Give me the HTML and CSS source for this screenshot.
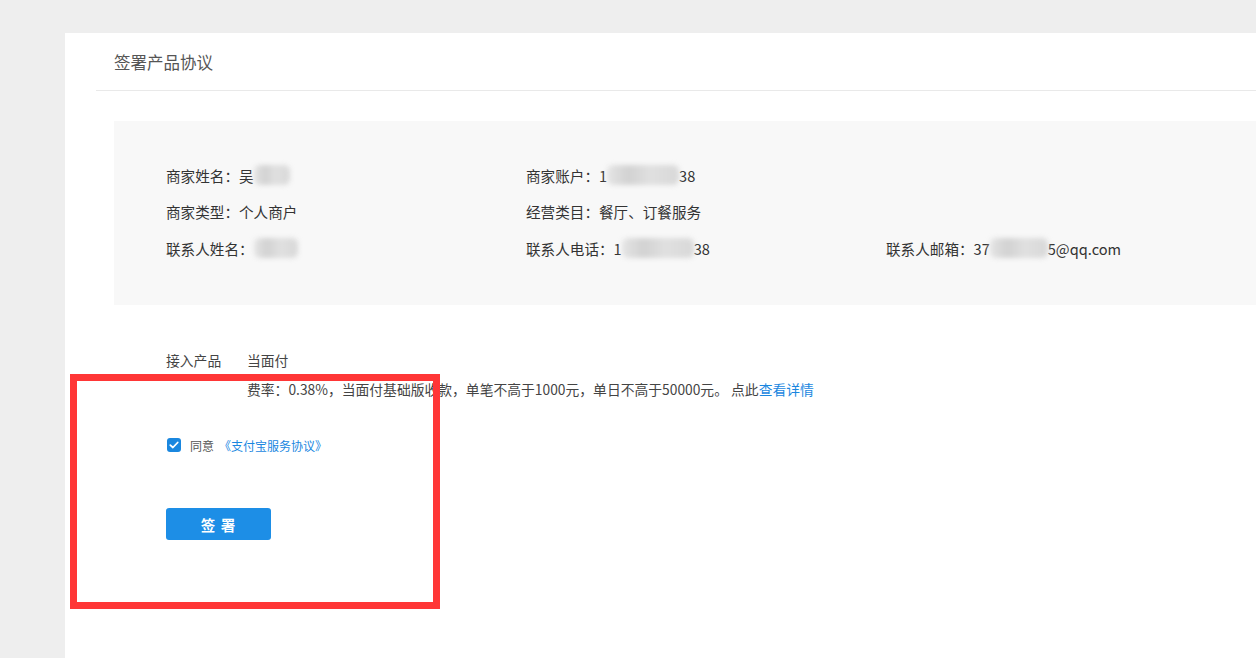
FILE: index.html
```html
<!DOCTYPE html>
<html lang="zh-CN">
<head>
<meta charset="utf-8">
<title>签署产品协议</title>
<link rel="stylesheet" href="styles.css">
</head>
<body>
<div class="page">
  <div class="panel">
    <div class="head"><h1 class="title">签署产品协议</h1></div>
    <div class="divider"></div>
    <div class="info">
      <div class="cell">商家姓名：吴<span class="blur w36"></span></div>
      <div class="cell">商家账户：1<span class="blur w72"></span>38</div>
      <div class="cell"></div>
      <div class="cell">商家类型：个人商户</div>
      <div class="cell">经营类目：餐厅、订餐服务</div>
      <div class="cell"></div>
      <div class="cell">联系人姓名：<span class="blur w44"></span></div>
      <div class="cell">联系人电话：1<span class="blur w72"></span>38</div>
      <div class="cell">联系人邮箱：37<span class="blur w58"></span>5@qq.com</div>
    </div>
    <div class="product">
      <div class="prow"><span class="plabel">接入产品</span><span>当面付</span></div>
      <div class="prow"><span class="plabel"></span><span>费率：0.38%，当面付基础版收款，单笔不高于1000元，单日不高于50000元。 点此<a class="link" href="#">查看详情</a></span></div>
    </div>
    <label class="agree"><span class="check"><svg width="10" height="8" viewBox="0 0 10 8"><path d="M1.3 4.1 L3.9 6.5 L8.7 1.5" fill="none" stroke="#fff" stroke-width="1.8" stroke-linecap="round" stroke-linejoin="round"/></svg></span><span class="agree-text">同意</span><a class="link small" href="#">《支付宝服务协议》</a></label>
    <div class="actions"><button class="btn">签 署</button></div>
  </div>
  <div class="mark"></div>
</div>
</body>
</html>
```
FILE: styles.css
```css
html, body { margin: 0; padding: 0; }
body {
  background: #eeeeee;
  font-family: "Microsoft YaHei", "Noto Sans CJK SC", "Noto Sans", sans-serif;
  color: #333;
}
.page {
  position: relative;
  padding: 33px 0 0 65px;
  height: 658px;
  box-sizing: border-box;
  overflow: hidden;
}
.panel {
  background: #fff;
  height: 625px;
}
.head {
  height: 57px;
  padding-left: 49px;
  display: flex;
  align-items: center;
}
.title {
  margin: 0;
  font-size: 16.5px;
  font-weight: normal;
  color: #555;
}
.divider {
  margin-left: 31px;
  border-top: 1px solid #e9e9e9;
}
.info {
  margin: 30px 0 0 49px;
  background: #f8f8f8;
  height: 184px;
  box-sizing: border-box;
  padding: 36px 0 0 52px;
  display: grid;
  grid-template-columns: 360px 360px 1fr;
  grid-auto-rows: 36.5px;
  font-size: 14.6px;
}
.cell {
  display: flex;
  align-items: center;
  white-space: nowrap;
  color: #333;
}
.blur {
  display: inline-block;
  height: 20px;
  background: linear-gradient(90deg, #e4e4e4, #d2d2d2 30%, #e0e0e0 60%, #d8d8d8);
  filter: blur(2.5px);
  border-radius: 6px;
}
.w36 { width: 36px; }
.w44 { width: 44px; }
.w58 { width: 58px; }
.w72 { width: 72px; }
.product {
  margin: 40px 0 0 101px;
  font-size: 13.8px;
  color: #444;
}
.prow {
  display: flex;
  height: 29px;
  align-items: center;
}
.plabel {
  width: 81px;
  flex: none;
}
.link { color: #1a87df; text-decoration: none; }
.agree {
  display: flex;
  align-items: center;
  margin: 32px 0 0 102px;
  height: 20px;
  font-size: 12px;
  color: #555;
}
.check {
  width: 14px;
  height: 14px;
  border-radius: 3px;
  background: #1a87df;
  display: flex;
  align-items: center;
  justify-content: center;
  margin-right: 9px;
}
.agree-text { margin-right: 5px; }
.link.small { font-size: 12px; }
.actions {
  margin: 53px 0 0 101px;
}
.btn {
  width: 105px;
  height: 32px;
  border: none;
  border-radius: 3px;
  background: #1d8ee6;
  color: #fff;
  font-family: inherit;
  font-size: 14.5px;
  font-weight: bold;
  letter-spacing: 1px;
  cursor: pointer;
}
.mark {
  position: absolute;
  left: 70px;
  top: 374px;
  width: 370px;
  height: 235px;
  box-sizing: border-box;
  border: 7px solid #ff3636;
}
```
